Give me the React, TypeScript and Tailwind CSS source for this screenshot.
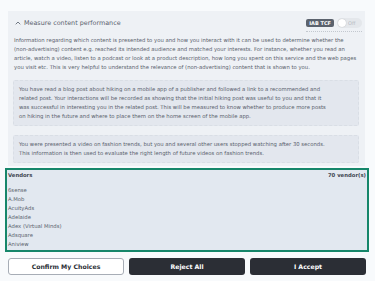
import { ChevronUp } from 'lucide-react';

const VENDORS = ['6sense', 'A.Mob', 'AcuityAds', 'Adelaide', 'Adex (Virtual Minds)', 'Adsquare', 'Aniview'];

function Toggle() {
  return (
    <div className="flex items-center border-b border-dotted border-[#c3c8cf] pb-[3px]">
      <span className="mr-[3px] rounded-[2px] bg-[#5b626d] px-[3px] py-[1px] text-[5px] font-bold leading-[6px] text-white">
        IAB TCF
      </span>
      <span className="flex h-[10px] w-[25px] items-center rounded-full bg-[#e4e7eb] pl-[1px]">
        <span className="h-[8px] w-[8px] rounded-full bg-white shadow-[0_0_1px_rgba(0,0,0,0.3)]" />
        <span className="ml-[2px] text-[5px] leading-[6px] text-[#b5bac1]">Off</span>
      </span>
    </div>
  );
}

export default function App() {
  return (
    <div className="min-h-screen bg-[#f8fafc] pt-[11px] font-['DejaVu_Sans',sans-serif] text-[#58606c]">
      {/* Purpose panel */}
      <div className="ml-[8px] w-[357px] bg-[#eef1f5] px-[6px] pb-[3px]">
        <div className="-mr-[3px] flex h-[22px] items-center justify-between pt-[2px]">
          <div className="flex items-center gap-[2px]">
            <ChevronUp className="h-[8px] w-[8px]" strokeWidth={2.5} />
            <span className="text-[6.4px] leading-[8px] text-[#5a626e]">Measure content performance</span>
          </div>
          <div className="pt-[4px]">
            <Toggle />
          </div>
        </div>
        <p className="mt-[3px] text-[5.3px] leading-[9px]">
          Information regarding which content is presented to you and how you interact with it can be used to determine whether the
          (non-advertising) content e.g. reached its intended audience and matched your interests. For instance, whether you read an
          article, watch a video, listen to a podcast or look at a product description, how long you spent on this service and the web pages
          you visit etc. This is very helpful to understand the relevance of (non-advertising) content that is shown to you.
        </p>
        <div className="-ml-[1px] mt-[8px] rounded-[2px] border border-dashed border-[#d9dee5] bg-[#e3e7ee] py-[4px] pl-[5px] pr-[27px] text-[5.3px] leading-[9px]">
          You have read a blog post about hiking on a mobile app of a publisher and followed a link to a recommended and
          related post. Your interactions will be recorded as showing that the initial hiking post was useful to you and that it
          was successful in interesting you in the related post. This will be measured to know whether to produce more posts
          on hiking in the future and where to place them on the home screen of the mobile app.
        </div>
        <div className="-ml-[1px] mt-[9px] rounded-[2px] border border-dashed border-[#d9dee5] bg-[#e3e7ee] py-[4px] pl-[5px] pr-[27px] text-[5.3px] leading-[9px]">
          You were presented a video on fashion trends, but you and several other users stopped watching after 30 seconds.
          This information is then used to evaluate the right length of future videos on fashion trends.
        </div>
      </div>

      {/* Vendors */}
      <div className="ml-[5px] mt-[2px] h-[84px] w-[364px] border-2 border-[#16866a] bg-[#e2e8f0] px-[1px] text-[5.3px] leading-[9px]">
        <div className="flex justify-between pt-[1px] font-bold text-[#3f4651]">
          <span>Vendors</span>
          <span>70 vendor(s)</span>
        </div>
        <ul className="mt-[6px]">
          {VENDORS.map((v) => (
            <li key={v}>{v}</li>
          ))}
        </ul>
      </div>

      {/* Actions */}
      <div className="mx-[8px] mt-[6px] grid w-[358px] grid-cols-3 gap-[5px]">
        <button className="h-[17px] rounded-[3px] border border-[#a7adb6] bg-white text-[6.2px] font-bold text-[#2a2e35]">
          Confirm My Choices
        </button>
        <button className="h-[17px] rounded-[3px] bg-[#2b2e35] text-[6.2px] font-bold text-white">Reject All</button>
        <button className="h-[17px] rounded-[3px] bg-[#2b2e35] text-[6.2px] font-bold text-white">I Accept</button>
      </div>
    </div>
  );
}
